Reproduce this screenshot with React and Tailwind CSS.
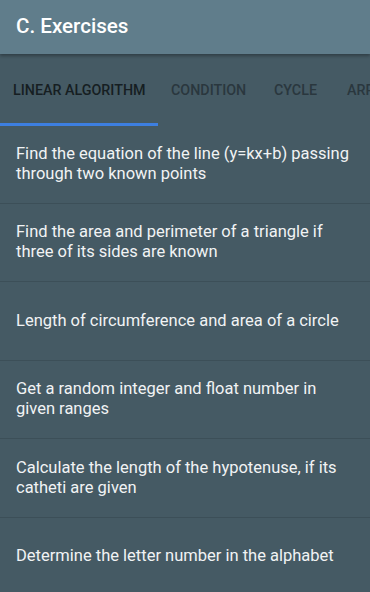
import React from "react";

const tabs = ["Linear algorithm", "Condition", "Cycle", "Array"];

const exercises = [
  "Find the equation of the line (y=kx+b) passing through two known points",
  "Find the area and perimeter of a triangle if three of its sides are known",
  "Length of circumference and area of a circle",
  "Get a random integer and float number in given ranges",
  "Calculate the length of the hypotenuse, if its catheti are given",
  "Determine the letter number in the alphabet",
];

export default function App() {
  return (
    <div
      className="w-[370px] h-[592px] overflow-hidden bg-[#455a64] flex flex-col"
      style={{ fontFamily: "Roboto, 'Liberation Sans', sans-serif" }}
    >
      {/* toolbar */}
      <div className="h-[54px] shrink-0 bg-[#607d8b] flex items-center px-4 shadow-[0_2px_3px_rgba(0,0,0,0.3)] relative z-10">
        <h1 className="text-[20.6px] font-medium text-white leading-none -mt-[1px]">
          C. Exercises
        </h1>
      </div>

      {/* tabs */}
      <div className="h-[72px] shrink-0 flex items-stretch whitespace-nowrap overflow-hidden">
        {tabs.map((tab, i) => (
          <div
            key={tab}
            className={`relative flex items-center px-[13px] shrink-0 ${
              i === 0 ? "w-[158px]" : ""
            } ${i === 1 ? "w-[103px]" : ""} ${i === 2 ? "w-[73px]" : ""}`}
          >
            <span
              className={`text-[14.3px] font-medium uppercase mt-[2px] ${
                i === 0 ? "text-[#161e22]" : "text-[#2a373e]"
              }`}
            >
              {tab}
            </span>
            {i === 0 && (
              <div className="absolute left-0 right-0 bottom-0 h-[3px] bg-[#3d7fe0]" />
            )}
          </div>
        ))}
      </div>

      {/* list */}
      <ul>
        {exercises.map((text, i) => (
          <li
            key={i}
            className={`flex items-center pl-4 pr-3 border-b border-[#3c4f58] ${
              i === 0 ? "h-[77.5px]" : "h-[78.5px]"
            }`}
          >
            <span className="text-[16.5px] leading-[20px] text-[#f1f3f4]">{text}</span>
          </li>
        ))}
      </ul>
    </div>
  );
}
